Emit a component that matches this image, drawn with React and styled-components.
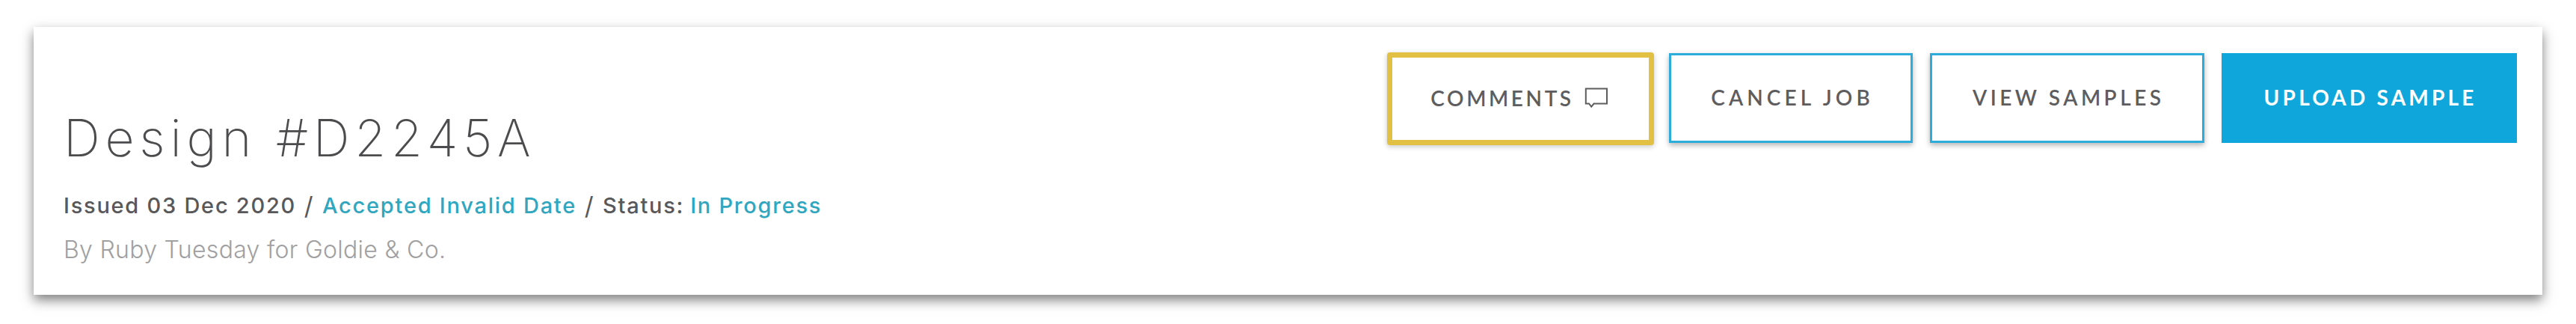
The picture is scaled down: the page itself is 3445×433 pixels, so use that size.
import styled, { createGlobalStyle, css } from "styled-components";

const job = {
  title: "Design #D2245A",
  issued: "03 Dec 2020",
  accepted: "Accepted Invalid Date",
  status: "In Progress",
  designer: "Ruby Tuesday",
  client: "Goldie & Co.",
};

const CommentIcon = () => (
  <svg width="32" height="30" viewBox="0 0 32 30" fill="none">
    <path
      d="M1.8 2.5H30V22.5H12.5L9.2 26.6L6 22.5H1.8Z"
      stroke="#5d5d5f"
      strokeWidth="2"
    />
  </svg>
);

const App = () => {
  return (
    <>
      <GlobalStyle />
      <Page>
        <JobHeader>
          <JobInfo>
            <Title>{job.title}</Title>
            <Meta>
              <span>Issued {job.issued}</span>
              <Slash>/</Slash>
              <MetaLink>{job.accepted}</MetaLink>
              <Slash>/</Slash>
              <span>Status:</span>
              <Status>{job.status}</Status>
            </Meta>
            <Byline>
              By {job.designer} for {job.client}
            </Byline>
          </JobInfo>
          <Actions>
            <CommentsButton>
              COMMENTS
              <CommentIcon />
            </CommentsButton>
            <Button $width={326} $spacing={5.1}>
              CANCEL JOB
            </Button>
            <Button $width={367} $spacing={4.5}>
              VIEW SAMPLES
            </Button>
            <Button $width={395} $spacing={4.2} $primary>
              UPLOAD SAMPLE
            </Button>
          </Actions>
        </JobHeader>
      </Page>
    </>
  );
};

export default App;

const GlobalStyle = createGlobalStyle`
  * {
    box-sizing: border-box;
  }
  body {
    margin: 0;
    background: #fff;
  }
`;

const Page = styled.div`
  height: 433px;
  padding: 36px 45px 39px;
`;

const JobHeader = styled.header`
  display: flex;
  justify-content: space-between;
  height: 358px;
  padding: 34px 34px 0 40px;
  background: #fff;
  box-shadow: 0 7px 15px rgba(0, 0, 0, 0.5);
  color: #58585a;
  font-family: Inter, "Liberation Sans", sans-serif;
`;

const JobInfo = styled.div`
  padding-top: 72px;
  white-space: nowrap;
`;

const Title = styled.h1`
  margin: 0;
  color: #4c4c4e;
  font-size: 68px;
  font-weight: 250;
  line-height: 84px;
  letter-spacing: 6.75px;
`;

const Meta = styled.div`
  display: flex;
  margin-top: 31px;
  font-size: 29px;
  font-weight: 550;
  line-height: 36px;
  letter-spacing: 1.75px;
`;

const Slash = styled.span`
  width: 35px;
  text-align: center;
  font-size: 33px;
  font-weight: 400;
`;

const MetaLink = styled.span`
  color: #31a6bf;
`;

const Status = styled(MetaLink)`
  margin-left: 8px;
`;

const Byline = styled.p`
  margin: 21px 0 0;
  color: #a0a0a2;
  font-size: 32px;
  font-weight: 300;
  line-height: 40px;
  letter-spacing: 0.3px;
`;

const Actions = styled.div`
  display: flex;
  align-items: flex-start;
`;

const Button = styled.button`
  display: flex;
  align-items: center;
  justify-content: center;
  width: ${(p) => p.$width}px;
  height: 120px;
  margin: 1px 0 0 23px;
  padding: 0 0 3px ${(p) => p.$spacing - 1}px;
  border: 3px solid #2bacda;
  background: #fff;
  box-shadow: 0 3px 7px rgba(0, 0, 0, 0.3);
  color: #5d5d5f;
  font-family: Lato, "Liberation Sans", sans-serif;
  font-size: 28px;
  font-weight: 600;
  letter-spacing: ${(p) => p.$spacing}px;
  white-space: nowrap;
  cursor: pointer;

  ${(p) =>
    p.$primary &&
    css`
      border-color: #0fa7db;
      background: #0fa7db;
      box-shadow: none;
      color: #fff;
      font-weight: 700;
    `}
`;

const CommentsButton = styled(Button).attrs({ $width: 357, $spacing: 3.6 })`
  height: 124px;
  margin: 0 -3px 0 0;
  padding: 0 3px 3px 0;
  border: 7.5px solid #e2c044;
  border-radius: 4px;
  box-shadow: 0 2px 7px rgba(0, 0, 0, 0.22);

  > svg {
    margin: 0 0 0 14px;
  }
`;
